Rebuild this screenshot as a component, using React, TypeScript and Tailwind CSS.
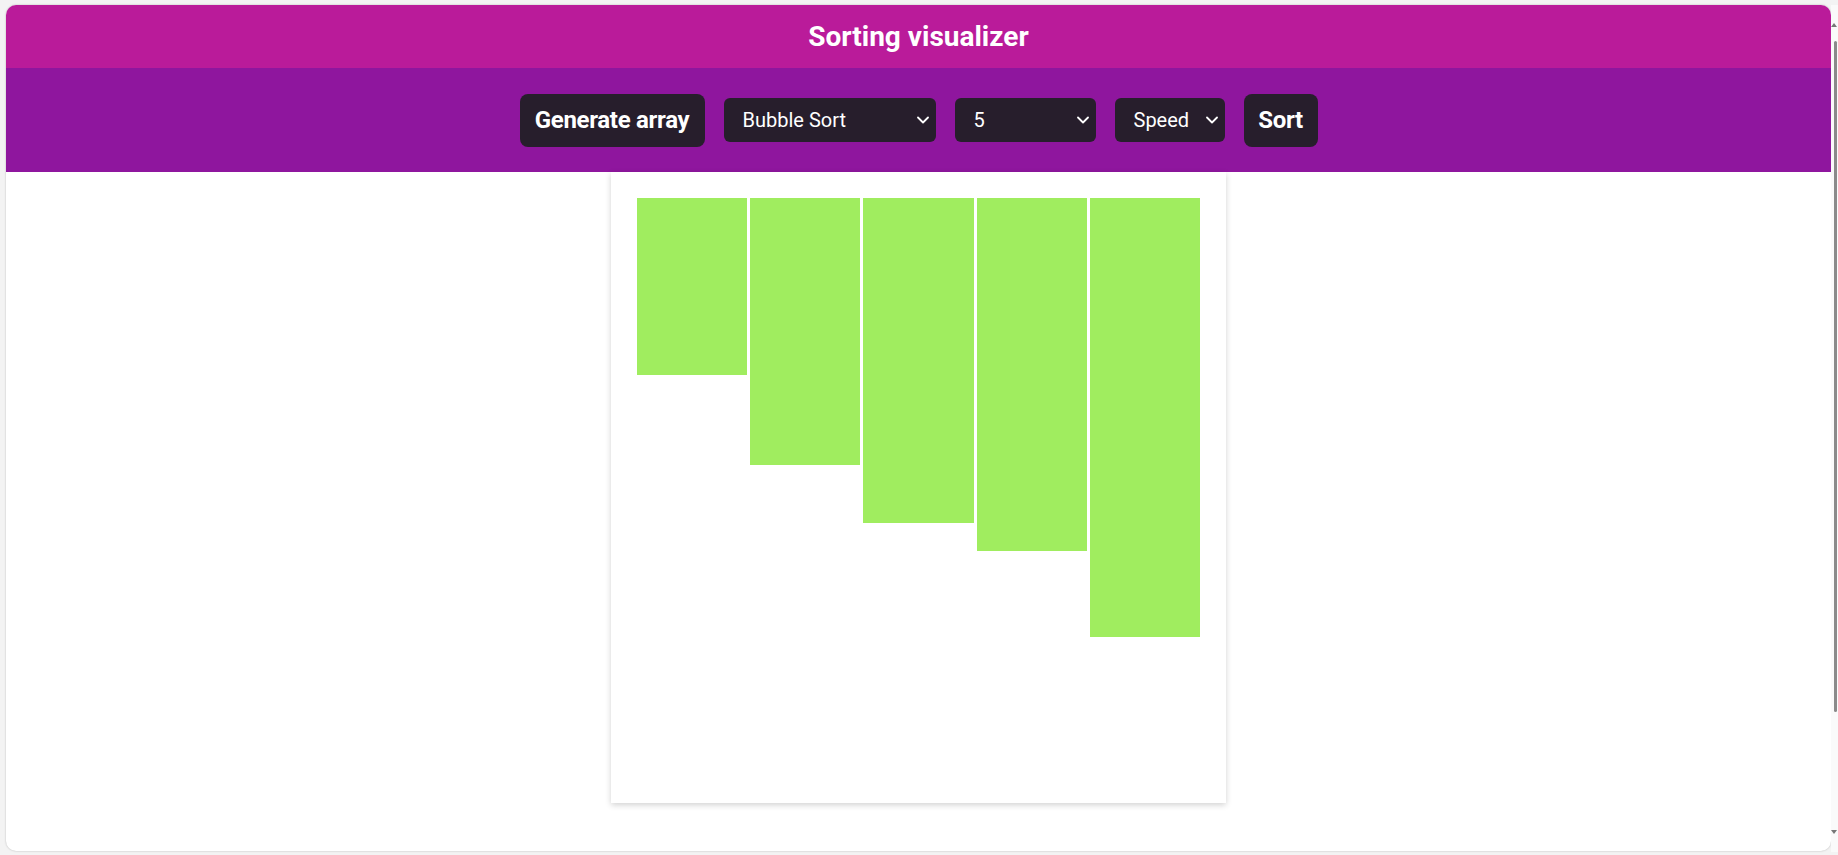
import { useState } from 'react'

const bars = [177, 267, 325, 353, 439]

function Chevron() {
  return (
    <svg
      className="pointer-events-none absolute right-[7px] top-1/2 -translate-y-1/2"
      width="12"
      height="8"
      viewBox="0 0 12 8"
      fill="none"
    >
      <polyline points="1,1.5 6,6.5 11,1.5" stroke="white" strokeWidth="1.8" strokeLinecap="round" strokeLinejoin="round" />
    </svg>
  )
}

function Select({ width, value, options, onChange }: { width: string; value: string; options: string[]; onChange: (v: string) => void }) {
  return (
    <div className={`relative ${width}`}>
      <select
        value={value}
        onChange={(e) => onChange(e.target.value)}
        className="h-[44px] w-full appearance-none rounded-[6px] bg-[#271e2c] pl-[19px] pr-[24px] text-[20px] text-white outline-none"
      >
        {options.map((o) => (
          <option key={o} value={o}>
            {o}
          </option>
        ))}
      </select>
      <Chevron />
    </div>
  )
}

export default function App() {
  const [algo, setAlgo] = useState('Bubble Sort')
  const [size, setSize] = useState('5')
  const [speed, setSpeed] = useState('Speed')

  return (
    <div className="relative h-[855px] w-full bg-[#f3f3f3] pb-[4px] pl-[6px] pr-[7px] pt-[5px] font-['Roboto',sans-serif]">
      <div className="flex h-full flex-col overflow-hidden rounded-[10px] bg-white shadow-[0_0_2px_rgba(0,0,0,0.25)]">
        <header className="flex h-[63px] shrink-0 items-center justify-center bg-[#ba1b9a]">
          <h1 className="text-[28px] font-bold text-white">Sorting visualizer</h1>
        </header>
        <div className="flex h-[104px] shrink-0 items-center justify-center gap-[19px] bg-[#8f169e]">
          <button className="h-[53px] w-[185px] rounded-[8px] bg-[#271e2c] text-[24px] font-bold tracking-[-0.3px] text-white">
            Generate array
          </button>
          <Select width="w-[212px]" value={algo} onChange={setAlgo} options={['Bubble Sort', 'Selection Sort', 'Insertion Sort', 'Merge Sort', 'Quick Sort']} />
          <Select width="w-[141px]" value={size} onChange={setSize} options={['5', '10', '20', '50', '100']} />
          <Select width="w-[110px]" value={speed} onChange={setSpeed} options={['Speed', 'Slow', 'Medium', 'Fast']} />
          <button className="h-[53px] w-[74px] rounded-[8px] bg-[#271e2c] text-[24px] font-bold tracking-[-0.3px] text-white">
            Sort
          </button>
        </div>
        <div className="flex justify-center">
          <div className="flex h-[631px] w-[615px] items-start gap-[3px] bg-white px-[26px] pt-[26px] shadow-[0_2px_6px_rgba(0,0,0,0.18)]">
            {bars.map((h, i) => (
              <div key={i} className="flex-1 bg-[#a0ed5f]" style={{ height: h }} />
            ))}
          </div>
        </div>
      </div>
      <div className="absolute bottom-[3px] right-0 top-[5px] flex w-[7px] flex-col items-end bg-[#fafafa] pr-[1px]">
        <div className="mt-[18px] h-0 w-0 border-x-[3px] border-b-[4px] border-x-transparent border-b-[#777]" />
        <div className="mt-[14px] w-[3px] flex-1 rounded-full bg-[#8a8a8a]" style={{ maxHeight: 671 }} />
        <div className="mb-[18px] mt-auto h-0 w-0 border-x-[3px] border-t-[4px] border-x-transparent border-t-[#777]" />
      </div>
    </div>
  )
}
